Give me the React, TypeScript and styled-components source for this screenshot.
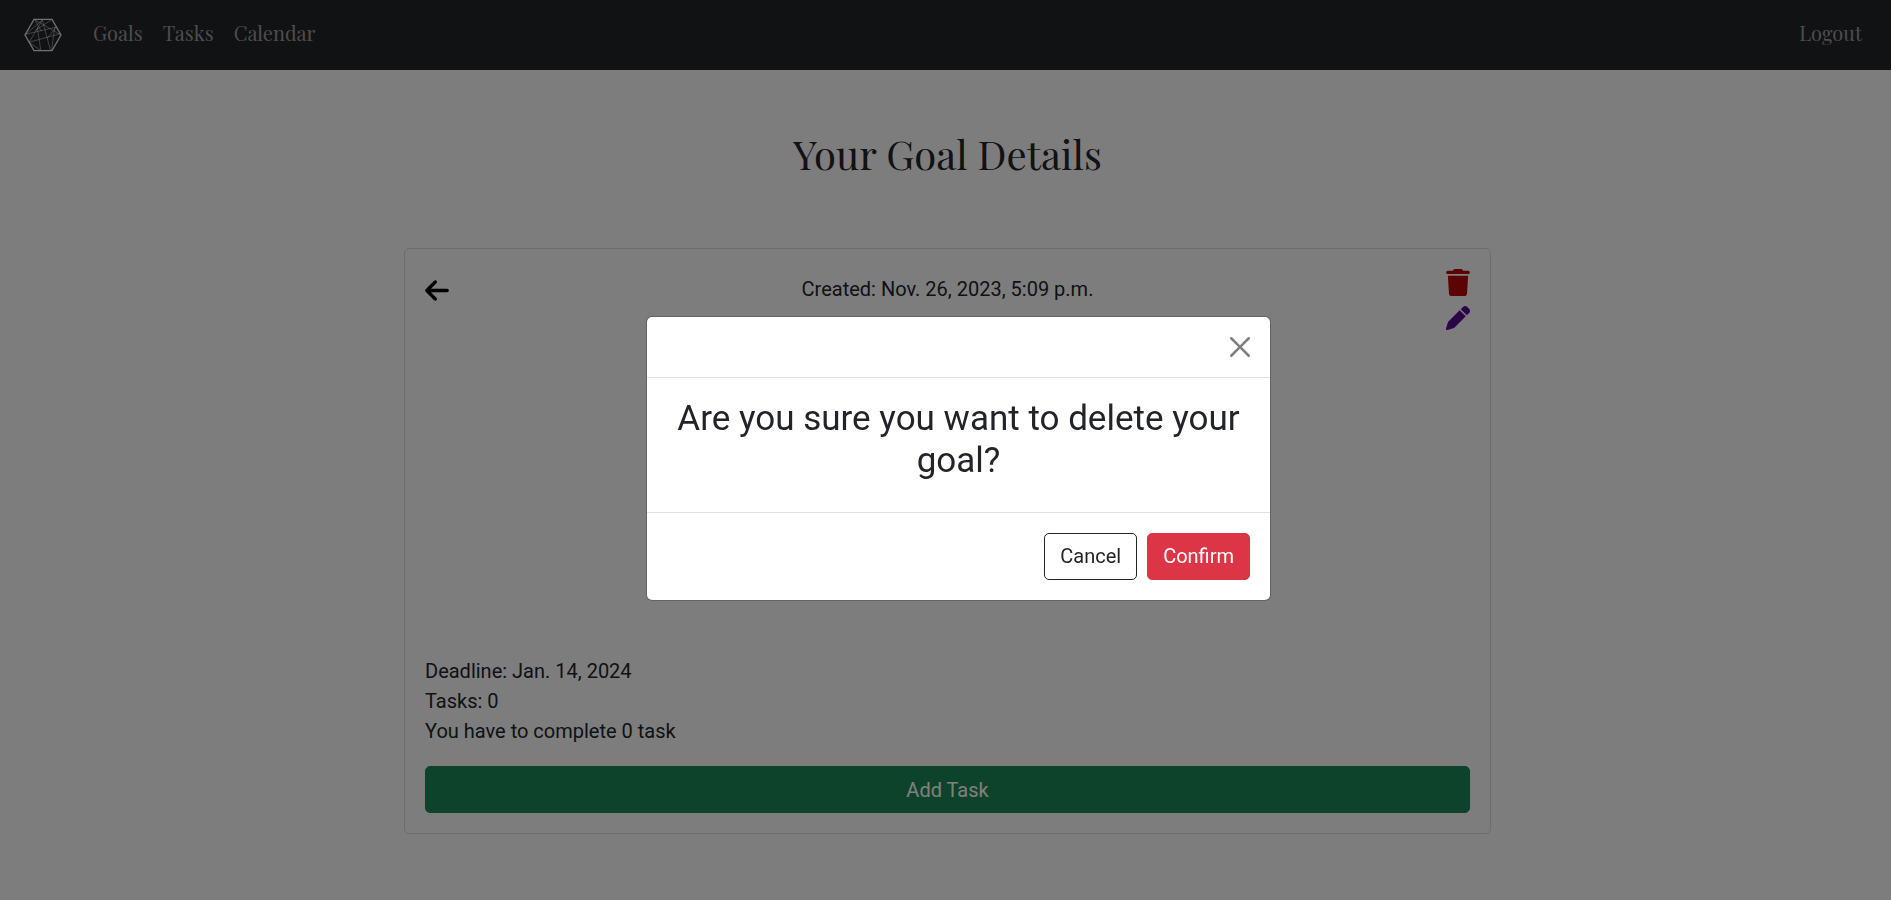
import React from "react";
import styled, { createGlobalStyle } from "styled-components";
import { FaArrowLeft, FaPen, FaTrash } from "react-icons/fa6";

const GlobalStyle = createGlobalStyle`
  *, *::before, *::after { box-sizing: border-box; }
  body {
    margin: 0;
    background: #fafafa;
    color: #212529;
    font: 400 20px/30px Roboto, "Liberation Sans", sans-serif;
  }
`;

const serif = `"Playfair Display", "Liberation Serif", serif`;

const NavBar = styled.nav`
  display: flex;
  align-items: center;
  height: 70px;
  padding: 0 19px 0 24px;
  background: #212529;
`;

const Brand = styled.a`
  display: flex;
  margin-right: 21px;
  color: #fff;
`;

const NavList = styled.ul`
  display: flex;
  flex: 1;
  margin: 0;
  padding: 0;
  list-style: none;
`;

const NavItem = styled.li<{ $end?: boolean }>`
  margin-left: ${(p) => (p.$end ? "auto" : "0")};
`;

const NavLink = styled.a`
  display: block;
  padding: 0 10px 4px;
  color: rgba(255, 255, 255, 0.55);
  font: 400 20px/30px ${serif};
  text-decoration: none;
`;

const Main = styled.main`
  display: flex;
  flex-direction: column;
  align-items: center;
  padding: 58px 16px 64px 20px;
`;

const Title = styled.h1`
  margin: 0 0 68px;
  font: 400 40px/52px ${serif};
`;

const Card = styled.section`
  display: flex;
  flex-direction: column;
  width: 100%;
  max-width: 1087px;
  padding: 20px;
  border: 1px solid rgba(0, 0, 0, 0.125);
  border-radius: 5px;
`;

const CardHead = styled.header`
  display: grid;
  grid-template-columns: 1fr auto 1fr;
  align-items: start;
  min-height: 387px;
`;

const Created = styled.p`
  margin: 5px 0 0;
`;

const Actions = styled.div`
  display: flex;
  flex-direction: column;
  align-items: flex-end;
  gap: 10px;
`;

const IconButton = styled.button<{ $color: string; $height: number }>`
  display: flex;
  justify-self: start;
  padding: 0;
  border: 0;
  background: none;
  color: ${(p) => p.$color};
  cursor: pointer;

  svg {
    width: 24px;
    height: ${(p) => p.$height}px;
  }
`;

const BackButton = styled(IconButton)`
  margin-top: 8px;
`;

const Facts = styled.div`
  margin-bottom: 20px;

  p {
    margin: 0;
  }
`;

const tones = {
  success: "background: #198754; border-color: #198754; color: #fff;",
  danger: "background: #dc3545; border-color: #dc3545; color: #fff;",
  outline: "background: transparent; border-color: #212529; color: #212529;",
};

const Button = styled.button<{ $tone: keyof typeof tones }>`
  height: 47px;
  padding: 0 15px;
  border: 1px solid;
  border-radius: 5px;
  font: inherit;
  cursor: pointer;
  ${(p) => tones[p.$tone]}
`;

const Backdrop = styled.div`
  position: fixed;
  inset: 0;
  display: flex;
  align-items: center;
  justify-content: center;
  padding: 16px 0 0 26px;
  background: rgba(0, 0, 0, 0.5);
`;

const Dialog = styled.div`
  width: 100%;
  max-width: 625px;
  border: 1px solid rgba(0, 0, 0, 0.2);
  border-radius: 6px;
  background: #fff;
  background-clip: padding-box;
`;

const DialogHead = styled.div`
  display: flex;
  justify-content: flex-end;
  padding: 20px;
  border-bottom: 1px solid #dee2e6;
`;

const CloseButton = styled.button`
  display: flex;
  padding: 0;
  border: 0;
  background: none;
  color: #000;
  opacity: 0.5;
  cursor: pointer;
`;

const DialogBody = styled.div`
  padding: 20px;
`;

const Question = styled.h2`
  margin: 0 0 10px;
  font-size: 35px;
  font-weight: 400;
  line-height: 42px;
  text-align: center;
`;

const DialogFoot = styled.div`
  display: flex;
  justify-content: flex-end;
  gap: 10px;
  padding: 20px;
  border-top: 1px solid #dee2e6;
`;

function Logo() {
  return (
    <svg width="38" height="34" viewBox="0 0 114 102" fill="none" stroke="currentColor" aria-hidden="true">
      <path strokeWidth="4" strokeOpacity="0.85" d="M3 51 30 4h54l27 47-27 47H30z" />
      <path
        strokeWidth="2"
        strokeOpacity="0.65"
        d="M3 51 55 6 15 73M30 4l81 47M33 6l19 34M55 6l24 90M15 73l35 24M15 73l93-26M5 49l92-22M40 28l10 68M97 27 70 60M84 4 33 38M92 28l-9 68"
      />
    </svg>
  );
}

export default function App() {
  return (
    <>
      <GlobalStyle />
      <NavBar>
        <Brand href="#" aria-label="Home">
          <Logo />
        </Brand>
        <NavList>
          <NavItem><NavLink href="#goals">Goals</NavLink></NavItem>
          <NavItem><NavLink href="#tasks">Tasks</NavLink></NavItem>
          <NavItem><NavLink href="#calendar">Calendar</NavLink></NavItem>
          <NavItem $end><NavLink href="#logout">Logout</NavLink></NavItem>
        </NavList>
      </NavBar>
      <Main>
        <Title>Your Goal Details</Title>
        <Card>
          <CardHead>
            <BackButton $color="#000" $height={27} aria-label="Back"><FaArrowLeft /></BackButton>
            <Created>Created: Nov. 26, 2023, 5:09 p.m.</Created>
            <Actions>
              <IconButton $color="#b90808" $height={27} aria-label="Delete goal"><FaTrash /></IconButton>
              <IconButton $color="#570b90" $height={24} aria-label="Edit goal"><FaPen /></IconButton>
            </Actions>
          </CardHead>
          <Facts>
            <p>Deadline: Jan. 14, 2024</p>
            <p>Tasks: 0</p>
            <p>You have to complete 0 task</p>
          </Facts>
          <Button $tone="success">Add Task</Button>
        </Card>
      </Main>
      <Backdrop>
        <Dialog role="dialog" aria-modal="true" aria-labelledby="question">
          <DialogHead>
            <CloseButton aria-label="Close">
              <svg width="20" height="20" viewBox="0 0 16 16" fill="currentColor" aria-hidden="true">
                <path d="M.293.293a1 1 0 011.414 0L8 6.586 14.293.293a1 1 0 111.414 1.414L9.414 8l6.293 6.293a1 1 0 01-1.414 1.414L8 9.414l-6.293 6.293a1 1 0 01-1.414-1.414L6.586 8 .293 1.707a1 1 0 010-1.414z" />
              </svg>
            </CloseButton>
          </DialogHead>
          <DialogBody>
            <Question id="question">Are you sure you want to delete your goal?</Question>
          </DialogBody>
          <DialogFoot>
            <Button $tone="outline">Cancel</Button>
            <Button $tone="danger">Confirm</Button>
          </DialogFoot>
        </Dialog>
      </Backdrop>
    </>
  );
}
